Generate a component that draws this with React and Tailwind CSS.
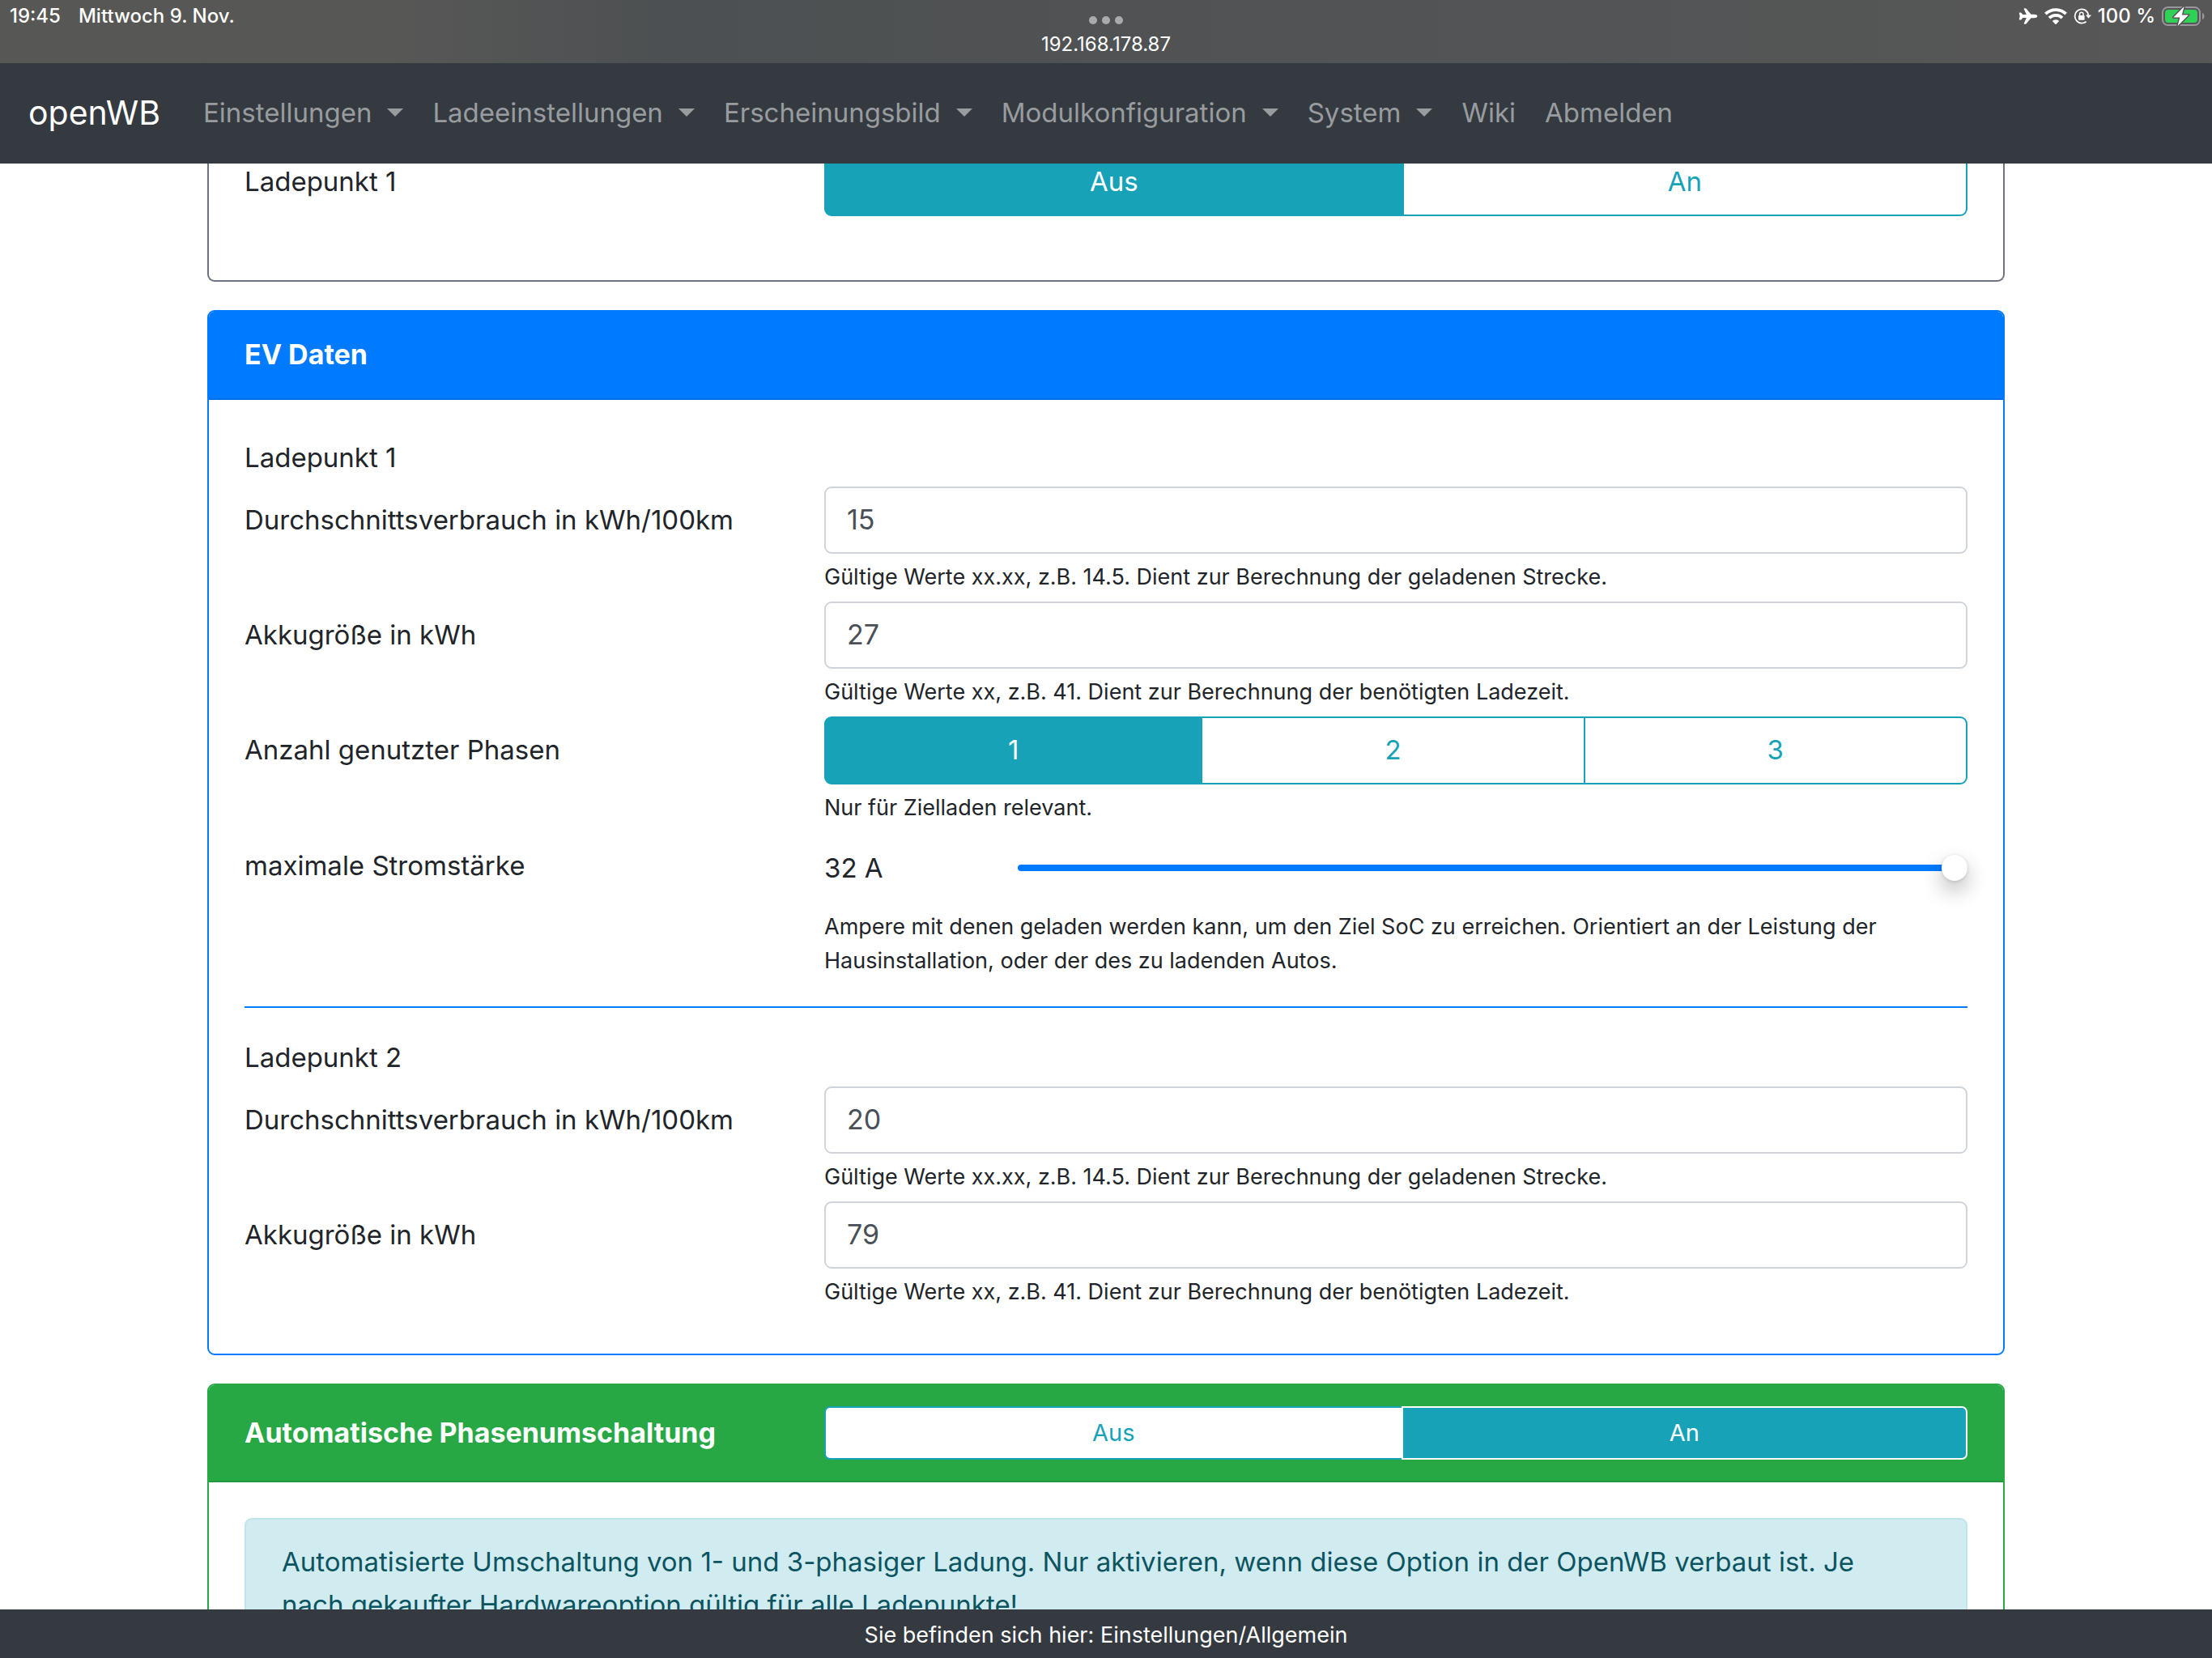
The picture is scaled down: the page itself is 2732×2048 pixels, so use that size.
import { useState } from 'react';
import { IoAirplane } from 'react-icons/io5';

const MENU = [
  { label: 'Einstellungen', dropdown: true },
  { label: 'Ladeeinstellungen', dropdown: true },
  { label: 'Erscheinungsbild', dropdown: true },
  { label: 'Modulkonfiguration', dropdown: true },
  { label: 'System', dropdown: true },
  { label: 'Wiki' },
  { label: 'Abmelden' },
];

const HINT_CONSUMPTION = 'Gültige Werte xx.xx, z.B. 14.5. Dient zur Berechnung der geladenen Strecke.';
const HINT_BATTERY = 'Gültige Werte xx, z.B. 41. Dient zur Berechnung der benötigten Ladezeit.';

function WifiIcon() {
  return (
    <svg className="w-7 h-5" viewBox="0 0 28 20" fill="none" stroke="currentColor" strokeWidth="3.8">
      <path d="M1.4 7.2a18 18 0 0 1 25.2 0" />
      <path d="M6 12.2a11.4 11.4 0 0 1 16 0" />
      <path d="M14 20.4l-4.2-4.4a6 6 0 0 1 8.4 0z" fill="currentColor" stroke="none" />
    </svg>
  );
}

function RotationLockIcon() {
  return (
    <svg className="w-[22px] h-5" viewBox="0 0 22 20" fill="none">
      <path d="M15.6 3.3A8.6 8.6 0 1 0 15.6 16.7" stroke="currentColor" strokeWidth="1.8" />
      <path d="M14.4 2.6a8.6 8.6 0 0 1 3.8 6" stroke="currentColor" strokeWidth="1.8" />
      <path d="M15 8.4h7l-3.5 4.4z" fill="currentColor" />
      <rect x="6" y="9" width="7.6" height="5.8" rx="1" fill="currentColor" />
      <path d="M7.6 9V7.4a2.2 2.2 0 0 1 4.4 0V9" stroke="currentColor" strokeWidth="1.5" />
    </svg>
  );
}

function BatteryIcon() {
  return (
    <svg className="w-[54px] h-6" viewBox="0 0 54 24" overflow="visible">
      <rect x="1" y="1" width="46" height="22" rx="6.5" fill="none" stroke="#98989a" strokeWidth="2" />
      <path d="M50 8c3.4 1 3.4 7 0 8z" fill="#98989a" />
      <rect x="4" y="4" width="40" height="16" rx="4" fill="#30d158" />
      <path
        d="M27.6 0L14.4 13.4h8L19.6 24 33 10.4h-8.2z"
        fill="#fff"
        stroke="#565656"
        strokeWidth="3"
        strokeLinejoin="round"
        paintOrder="stroke"
      />
    </svg>
  );
}

function StatusBar() {
  return (
    <div className="grid grid-cols-3 h-[78px] shrink-0 px-2 text-[24px] leading-[28px] font-medium text-white bg-linear-to-r from-[#575756] from-18% via-[#4d5052] via-30% to-[#575757]">
      <div className="flex gap-[22px] pt-[6px] pl-1">
        <span>19:45</span>
        <span>Mittwoch 9. Nov.</span>
      </div>
      <div className="flex flex-col items-center pt-5">
        <div className="flex gap-[6px]">
          <span className="size-[10px] rounded-full bg-[#a9acae]" />
          <span className="size-[10px] rounded-full bg-[#a9acae]" />
          <span className="size-[10px] rounded-full bg-[#a9acae]" />
        </div>
        <span className="mt-[11px] font-normal">192.168.178.87</span>
      </div>
      <div className="flex justify-end items-start pt-[6px]">
        <div className="flex items-center gap-2 h-7">
          <IoAirplane className="size-6" />
          <WifiIcon />
          <RotationLockIcon />
          <span>100 %</span>
          <BatteryIcon />
        </div>
      </div>
    </div>
  );
}

function NavBar() {
  return (
    <nav className="flex items-center h-[124px] shrink-0 px-[35px] pb-[2px] bg-[#343a40]">
      <a href="#home" className="mr-[35px] text-[41px] leading-[63px] text-white">openWB</a>
      <ul className="flex text-[33px] leading-[53px] text-[#999c9f]">
        {MENU.map((item) => (
          <li key={item.label}>
            {item.dropdown ? (
              <button type="button" className="flex items-center px-[18px]">
                {item.label}
                <svg className="w-5 h-[10px] ml-[19px]" viewBox="0 0 20 10" fill="currentColor">
                  <path d="M0 0h20L10 10z" />
                </svg>
              </button>
            ) : (
              <a href="#page" className="block px-[18px]">{item.label}</a>
            )}
          </li>
        ))}
      </ul>
    </nav>
  );
}

function ToggleGroup({ name, label, options, initial }) {
  const [value, setValue] = useState(initial);

  return (
    <div role="radiogroup" aria-label={label} className="flex h-[84px]">
      {options.map((option) => (
        <label
          key={option}
          className="flex flex-auto items-center justify-center px-[26px] pb-[2px] -ml-[2px] first:ml-0 border-2 border-[#17a2b8] first:rounded-l-[9px] last:rounded-r-[9px] bg-white text-[#17a2b8] has-checked:bg-[#17a2b8] has-checked:text-white"
        >
          <input
            type="radio"
            name={name}
            value={option}
            checked={value === option}
            onChange={() => setValue(option)}
            className="sr-only"
          />
          {option}
        </label>
      ))}
    </div>
  );
}

function HeaderToggle({ name, label, options, initial }) {
  const [value, setValue] = useState(initial);

  return (
    <div role="radiogroup" aria-label={label} className="flex h-[66px] text-[29px] leading-[42px]">
      {options.map((option) => (
        <label
          key={option}
          className="flex flex-auto items-center justify-center px-[18px] -ml-[2px] first:ml-0 border-2 border-[#17a2b8] first:rounded-l-[7px] last:rounded-r-[7px] bg-white text-[#17a2b8] has-checked:border-white has-checked:bg-[#17a2b8] has-checked:text-white"
        >
          <input
            type="radio"
            name={name}
            value={option}
            checked={value === option}
            onChange={() => setValue(option)}
            className="sr-only"
          />
          {option}
        </label>
      ))}
    </div>
  );
}

function Row({ id, label, hint, children }) {
  return (
    <div className="grid grid-cols-3 gap-x-5">
      <label htmlFor={id} className="self-start py-[15px]">{label}</label>
      <div className="col-span-2">
        {children}
        {hint && <small className="block mt-2 text-[27px] leading-[42px]">{hint}</small>}
      </div>
    </div>
  );
}

function NumberRow({ id, label, hint, value }) {
  return (
    <Row id={id} label={label} hint={hint}>
      <input
        id={id}
        type="text"
        inputMode="decimal"
        defaultValue={value}
        className="block w-full h-[83px] px-[26px] pb-[2px] border-2 border-[#ced4da] rounded-[9px] bg-white text-[34px] text-[#495057]"
      />
    </Row>
  );
}

function CurrentRow() {
  const [current, setCurrent] = useState(32);

  return (
    <Row
      id="current-lp1"
      label="maximale Stromstärke"
      hint="Ampere mit denen geladen werden kann, um den Ziel SoC zu erreichen. Orientiert an der Leistung der Hausinstallation, oder der des zu ladenden Autos."
    >
      <div className="grid grid-cols-6 gap-x-5 items-center h-[88px]">
        <output htmlFor="current-lp1">{current} A</output>
        <input
          id="current-lp1"
          type="range"
          min="6"
          max="32"
          value={current}
          onChange={(e) => setCurrent(Number(e.target.value))}
          className="col-span-5 w-full h-2 appearance-none rounded-full bg-[#007bff] [&::-webkit-slider-thumb]:appearance-none [&::-webkit-slider-thumb]:size-8 [&::-webkit-slider-thumb]:rounded-full [&::-webkit-slider-thumb]:bg-white [&::-webkit-slider-thumb]:shadow-[0_1px_4px_rgba(0,0,0,0.15),0_12px_26px_rgba(0,0,0,0.28)]"
        />
      </div>
    </Row>
  );
}

export default function App() {
  return (
    <div className="flex flex-col h-screen overflow-hidden bg-white font-['Inter',sans-serif] text-[33px] leading-[53px] text-[#212529]">
      <StatusBar />
      <NavBar />

      {/* Scrolled settings form */}
      <main className="flex-1 min-h-0 overflow-hidden px-64">
        <form className="flex flex-col gap-[35px] -mt-[19px]">
          <section className="px-11 pb-[79px] border-2 border-t-0 border-[#6c757d] rounded-b-[9px]">
            <Row label="Ladepunkt 1">
              <ToggleGroup name="lp1" label="Ladepunkt 1" options={['Aus', 'An']} initial="Aus" />
            </Row>
          </section>

          {/* EV data */}
          <section className="border-2 border-[#007bff] rounded-[9px]">
            <h2 className="px-11 pt-[26px] pb-[28px] border-b-2 border-[#006fe6] rounded-t-[7px] bg-[#007bff] text-[34px] font-bold text-white">
              EV Daten
            </h2>
            <div className="px-11 pt-[45px] pb-[55px]">
              <div className="flex flex-col gap-[9px]">
                <h3>Ladepunkt 1</h3>
                <NumberRow id="consumption-lp1" label="Durchschnittsverbrauch in kWh/100km" hint={HINT_CONSUMPTION} value="15" />
                <NumberRow id="battery-lp1" label="Akkugröße in kWh" hint={HINT_BATTERY} value="27" />
                <Row label="Anzahl genutzter Phasen" hint="Nur für Zielladen relevant.">
                  <ToggleGroup name="phases-lp1" label="Anzahl genutzter Phasen" options={['1', '2', '3']} initial="1" />
                </Row>
                <CurrentRow />
              </div>
              <hr className="my-[35px] border-t-2 border-[#007bff]" />
              <div className="flex flex-col gap-[9px]">
                <h3>Ladepunkt 2</h3>
                <NumberRow id="consumption-lp2" label="Durchschnittsverbrauch in kWh/100km" hint={HINT_CONSUMPTION} value="20" />
                <NumberRow id="battery-lp2" label="Akkugröße in kWh" hint={HINT_BATTERY} value="79" />
              </div>
            </div>
          </section>

          {/* Automatic phase switching */}
          <section className="border-2 border-[#28a745] rounded-[9px]">
            <div className="grid grid-cols-3 gap-x-5 items-center px-11 py-[26px] border-b-2 border-[#24963e] rounded-t-[7px] bg-[#28a745] text-white">
              <h2 className="pb-[2px] text-[34px] font-bold">Automatische Phasenumschaltung</h2>
              <div className="col-span-2">
                <HeaderToggle name="u1p3p" label="Automatische Phasenumschaltung" options={['Aus', 'An']} initial="An" />
              </div>
            </div>
            <div className="p-11">
              <p className="pl-11 pr-[88px] py-[26px] border-2 border-[#bee5eb] rounded-[9px] bg-[#d1ecf1] text-[#0c5460]">
                Automatisierte Umschaltung von 1- und 3-phasiger Ladung. Nur aktivieren, wenn diese Option in der OpenWB verbaut ist. Je nach gekaufter Hardwareoption gültig für alle Ladepunkte!
              </p>
            </div>
          </section>
        </form>
      </main>

      <footer className="flex items-center justify-center h-[60px] shrink-0 pt-[3px] bg-[#343a40] text-[27px] leading-[42px] text-white">
        Sie befinden sich hier: Einstellungen/Allgemein
      </footer>
    </div>
  );
}
